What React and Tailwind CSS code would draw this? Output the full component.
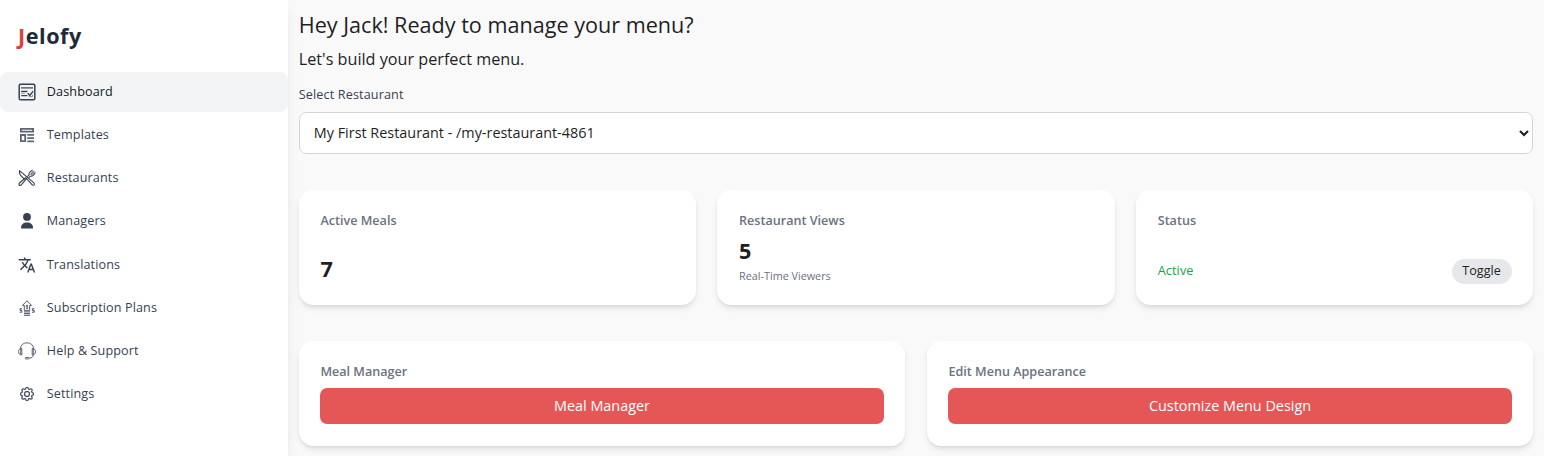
import React from "react";
import { MdTranslate } from "react-icons/md";
import { BsGear } from "react-icons/bs";

function DashboardIcon() {
  return (
    <svg viewBox="0 0 18 18" className="size-[18px]" fill="none" stroke="currentColor">
      <rect x="1.2" y="1.2" width="15.6" height="15.6" rx="1.4" strokeWidth="1.5" />
      <path d="M3 4.9h12" strokeWidth="1.2" />
      <path d="M3.2 8.5h6.2M3.2 12.7h6.2" strokeWidth="1.3" />
      <path d="M3.2 10.6h3.4" strokeWidth="0.4" />
      <path d="M9.8 10.3l2 2.2 3.4-4.4" strokeWidth="1.4" />
      <path d="M10.8 13.6h3.6v-2" strokeWidth="0.8" opacity="0.7" />
    </svg>
  );
}

function TemplateIcon() {
  return (
    <svg viewBox="0 0 18 18" className="size-[18px] opacity-80" fill="none" stroke="currentColor">
      <path d="M2.9 2.9h12.2v2.7H2.9z" strokeWidth="1.8" />
      <path d="M2.9 9h4.3v6.2H2.9z" strokeWidth="1.8" />
      <path d="M9.3 8.9H16M9.3 12.1H16M9.3 15.3H16" strokeWidth="1.8" />
    </svg>
  );
}

function RestaurantIcon() {
  return (
    <svg
      viewBox="0 0 18 18"
      className="size-[18px]"
      fill="none"
      stroke="currentColor"
      strokeWidth="1.1"
      strokeLinejoin="round"
      strokeLinecap="round"
    >
      <path d="M1.5 1.7c-.5 2.4.5 4.3 2.3 6l2.5 2.3 1.4-1.3 6.3 7c.7.8 1.6.7 2.1.2.6-.6.5-1.4-.2-2.1z" />
      <path d="M8.3 9.9l-5 5.9c-.6.7-1.5.7-2 .2-.6-.6-.5-1.4.2-2l5.2-4.5M9.6 7.300l1.500-1.400c-.3-1.100 0-2 .8-2.800l2.300-2M11.100 8.500l1.200-1.300c1.200.2 2.100-.1 2.900-.9l1.900-2.300" />
      <path d="M12.6 5.2L15.4 2.1M13.4 6L16.5 3" strokeWidth="1" />
    </svg>
  );
}

function ManagerIcon() {
  return (
    <svg viewBox="0 0 18 18" className="size-[18px]" fill="currentColor">
      <circle cx="9" cy="4.9" r="3.9" />
      <path d="M3 16.5V15.8C3 12.3 5.3 10.400 9 10.400s6 1.900 6 5.400v.7z" />
    </svg>
  );
}

function SubscriptionIcon() {
  return (
    <svg viewBox="0 0 18 18" className="size-[18px]" fill="none" stroke="currentColor" strokeWidth="0.85">
      <path d="M6.3 11.4V6.400H4.500L9 1.700l4.500 4.700H11.700v5z" />
      <path d="M10.200 6.500H8.200v1.400h1.700v1.500H7.900M9 5.800v4.200" strokeWidth="0.6" />
      <path d="M6 12.900h6M6 14.600h6M6 16.300h6" strokeWidth="0.9" />
      <path d="M4 9.700H2v1.700h1.800v1.800H1.600M16.400 9.700h-2v1.700h1.800v1.800H14" strokeWidth="0.9" />
    </svg>
  );
}

function HelpIcon() {
  return (
    <svg viewBox="0 0 18 18" className="size-[18px]" fill="none" stroke="currentColor" strokeWidth="0.8">
      <path d="M2.3 6.7C2.7 2.9 5.4.8 9 .8s6.300 2.100 6.700 5.900" />
      <path d="M3.8 6.5v6.4c-2 .1-3.3-1.2-3.3-3.2S1.8 6.4 3.8 6.5zM2.7 6.8v5.8" />
      <path d="M14.2 6.5v6.4c2 .1 3.3-1.2 3.3-3.2s-1.3-3.3-3.3-3.2zM15.3 6.8v5.8" />
      <path d="M15.3 12.9c-.2 2.2-1.5 3.2-4.3 3.2" />
      <rect x="7.3" y="15.5" width="3.6" height="1.5" rx="0.7" />
    </svg>
  );
}

const navItems = [
  { label: "Dashboard", icon: <DashboardIcon />, active: true },
  { label: "Templates", icon: <TemplateIcon /> },
  { label: "Restaurants", icon: <RestaurantIcon /> },
  { label: "Managers", icon: <ManagerIcon /> },
  { label: "Translations", icon: <MdTranslate className="size-[18px]" /> },
  { label: "Subscription Plans", icon: <SubscriptionIcon /> },
  { label: "Help & Support", icon: <HelpIcon /> },
  { label: "Settings", icon: <BsGear className="size-[18px] stroke-[0.3] p-[1.8px]" /> },
];

function Sidebar() {
  return (
    <aside className="z-10 flex w-72 shrink-0 flex-col bg-white shadow-[0_9px_14px_-3px_rgba(0,0,0,0.1),0_4px_6px_-4px_rgba(0,0,0,0.1)]">
      <div className="flex h-[72px] items-center pl-[18px] text-[21.6px] font-bold tracking-[0.54px] text-gray-800">
        <span className="text-[#e03e3e]">J</span>elofy
      </div>
      <nav className="flex flex-col gap-[3.6px]">
        {navItems.map((item) => (
          <a
            key={item.label}
            className={
              item.active
                ? "flex h-[39.6px] items-center gap-[10.8px] rounded-[7.2px] bg-[#f3f4f6] px-[18px] text-[12.6px] font-medium tracking-[0.12px] text-[#111827]"
                : "flex h-[39.6px] items-center gap-[10.8px] rounded-[7.2px] px-[18px] text-[12.6px] font-medium tracking-[0.12px] text-[#374151]"
            }
          >
            <span className="text-[#374151]">{item.icon}</span>
            <span className="pt-[0.9px]">{item.label}</span>
          </a>
        ))}
      </nav>
    </aside>
  );
}

function Card({ title, children }) {
  return (
    <section className="flex flex-col rounded-[14.4px] bg-white p-[21.6px] shadow-[0_4px_6px_-1px_rgba(0,0,0,0.1),0_2px_4px_-2px_rgba(0,0,0,0.1)]">
      <h2 className="pt-[0.6px] text-[12.6px] leading-[18px] font-semibold text-[#6b7280]">{title}</h2>
      {children}
    </section>
  );
}

function ActionButton({ children }) {
  return (
    <button className="mt-[7.2px] h-9 w-full shrink-0 rounded-[7.2px] bg-[#e55757] text-[14.4px] text-white">
      {children}
    </button>
  );
}

export default function App() {
  return (
    <div className="flex h-[456px] overflow-hidden bg-[#f9f9f9] font-['Open_Sans',sans-serif] text-[#1f1f1f]">
      <Sidebar />
      <main className="min-w-0 flex-1 px-[10.8px] pt-[10.8px]">
        <h1 className="text-[21.6px] leading-[28.8px]">Hey Jack! Ready to manage your menu?</h1>
        <p className="mt-[7.2px] text-[16.2px] leading-[25.2px]">Let&apos;s build your perfect menu.</p>
        <label className="mt-[14.4px] block text-[12.6px] leading-[18px] font-medium tracking-[0.14px] text-[#374151]">
          Select Restaurant
        </label>
        <select className="mt-[7.2px] block h-[42px] w-full rounded-[7.2px] border border-gray-300 bg-white pr-[10.8px] pl-[10px] text-[14.4px]">
          <option>My First Restaurant - /my-restaurant-4861</option>
        </select>
        <div className="mt-9 grid h-[115px] grid-cols-3 gap-[21.6px]">
          <Card title="Active Meals">
            <p className="mt-auto -mb-[0.8px] text-[21.6px] leading-[28.8px] font-bold">7</p>
          </Card>
          <Card title="Restaurant Views">
            <p className="mt-[7.2px] text-[21.6px] leading-[28.8px] font-bold">5</p>
            <p className="mt-[3px] text-[10.8px] leading-[14.4px] text-[#6b7280]">Real-Time Viewers</p>
          </Card>
          <Card title="Status">
            <div className="mt-auto -mb-[0.6px] flex items-center justify-between text-[12.6px] leading-[18px]">
              <span className="font-medium tracking-[0.14px] text-[#16a34a]">Active</span>
              <button className="rounded-full bg-gray-200 px-[10.8px] py-[3.6px]">Toggle</button>
            </div>
          </Card>
        </div>
        <div className="mt-9 grid h-[105px] grid-cols-2 gap-[21.6px]">
          <Card title="Meal Manager">
            <ActionButton>Meal Manager</ActionButton>
          </Card>
          <Card title="Edit Menu Appearance">
            <ActionButton>Customize Menu Design</ActionButton>
          </Card>
        </div>
      </main>
    </div>
  );
}
